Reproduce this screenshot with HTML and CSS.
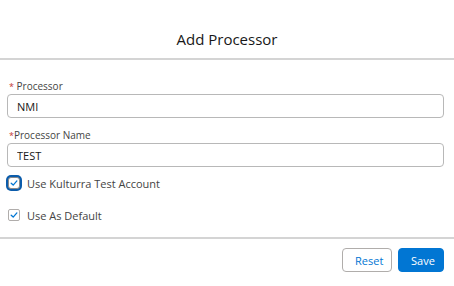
FILE: index.html
```html
<!DOCTYPE html>
<html lang="en">
<head>
  <meta charset="UTF-8">
  <meta name="viewport" content="width=device-width, initial-scale=1.0">
  <title>Add Processor</title>
  <link rel="stylesheet" href="styles.css">
</head>
<body>
  <div class="modal">
    <header class="modal-header">
      <h2 class="modal-title">Add Processor</h2>
    </header>

    <div class="modal-body">
      <div class="field">
        <label class="field-label" for="processor"><abbr class="req">*</abbr> Processor</label>
        <input class="field-input" id="processor" type="text" value="NMI">
      </div>
      <div class="field">
        <label class="field-label" for="processorName"><abbr class="req">*</abbr>Processor Name</label>
        <input class="field-input" id="processorName" type="text" value="TEST">
      </div>

      <div class="checks">
        <label class="check is-focused">
          <span class="check-box">
            <svg viewBox="0 0 10 10" width="8" height="8"><path d="M1.5 5.3 L4 7.6 L8.6 2.4" fill="none" stroke="#0176d3" stroke-width="1.6" stroke-linecap="round" stroke-linejoin="round"/></svg>
          </span>
          Use Kulturra Test Account
        </label>
        <label class="check">
          <span class="check-box">
            <svg viewBox="0 0 10 10" width="8" height="8"><path d="M1.5 5.3 L4 7.6 L8.6 2.4" fill="none" stroke="#0176d3" stroke-width="1.6" stroke-linecap="round" stroke-linejoin="round"/></svg>
          </span>
          Use As Default
        </label>
      </div>
    </div>

    <footer class="modal-footer">
      <button class="btn btn-neutral">Reset</button>
      <button class="btn btn-brand">Save</button>
    </footer>
  </div>
</body>
</html>
```

FILE: styles.css
```css
:root {
  --brand: #0176d3;
  --border: #c9c9c9;
  --text: #181818;
  --label: #444444;
  --req: #c23934;
}
html, body {
  margin: 0;
  padding: 0;
  background: #ffffff;
}
body {
  font-family: "Open Sans", "Noto Sans", sans-serif;
  color: var(--text);
}
.modal {
  width: 454px;
  height: 286px;
  display: flex;
  flex-direction: column;
}
.modal-header {
  height: 60px;
  border-bottom: 2px solid #d4d4d4;
  display: flex;
  align-items: flex-end;
  justify-content: center;
  box-sizing: border-box;
  padding-bottom: 8px;
}
.modal-title {
  margin: 0;
  font-size: 15px;
  font-weight: 400;
  line-height: 22px;
  color: #181818;
}
.modal-body {
  padding: 19px 10px 12px 7px;
  border-bottom: 2px solid #d4d4d4;
}
.field {
  margin-bottom: 10px;
}
.field-label {
  display: block;
  font-size: 10px;
  line-height: 15px;
  color: var(--label);
  padding-left: 2px;
}
.req {
  color: var(--req);
  text-decoration: none;
  border: none;
  font-size: 9px;
}
.field-input {
  display: block;
  width: 100%;
  box-sizing: border-box;
  height: 24px;
  border: 1px solid #b8b8b8;
  border-radius: 4px;
  padding: 0 9px;
  font-family: inherit;
  font-size: 11px;
  color: var(--text);
  outline: none;
}
.checks {
  margin-top: -4px;
  display: flex;
  flex-direction: column;
  gap: 12px;
}
.check {
  display: flex;
  align-items: center;
  height: 20px;
  gap: 7px;
  font-size: 11px;
  color: var(--label);
  padding-left: 1px;
}
.check-box {
  width: 12px;
  height: 12px;
  box-sizing: border-box;
  border: 1px solid #b0adab;
  border-radius: 2px;
  display: flex;
  align-items: center;
  justify-content: center;
  background: #fff;
}
.check.is-focused .check-box {
  border-color: #8a8a8a;
  box-shadow: 0 0 0 2px #0b5cab;
  border-radius: 3px;
}
.modal-footer {
  display: flex;
  justify-content: flex-end;
  gap: 6px;
  padding: 9px 10px 0 0;
}
.btn {
  height: 24px;
  box-sizing: border-box;
  border-radius: 4px;
  font-family: inherit;
  font-size: 11px;
  padding: 0 12px;
  cursor: pointer;
}
.btn-neutral {
  width: 50px;
  background: #fff;
  border: 1px solid #b0adab;
  color: var(--brand);
}
.btn-brand {
  width: 46px;
  background: var(--brand);
  border: 1px solid var(--brand);
  color: #fff;
}
```
